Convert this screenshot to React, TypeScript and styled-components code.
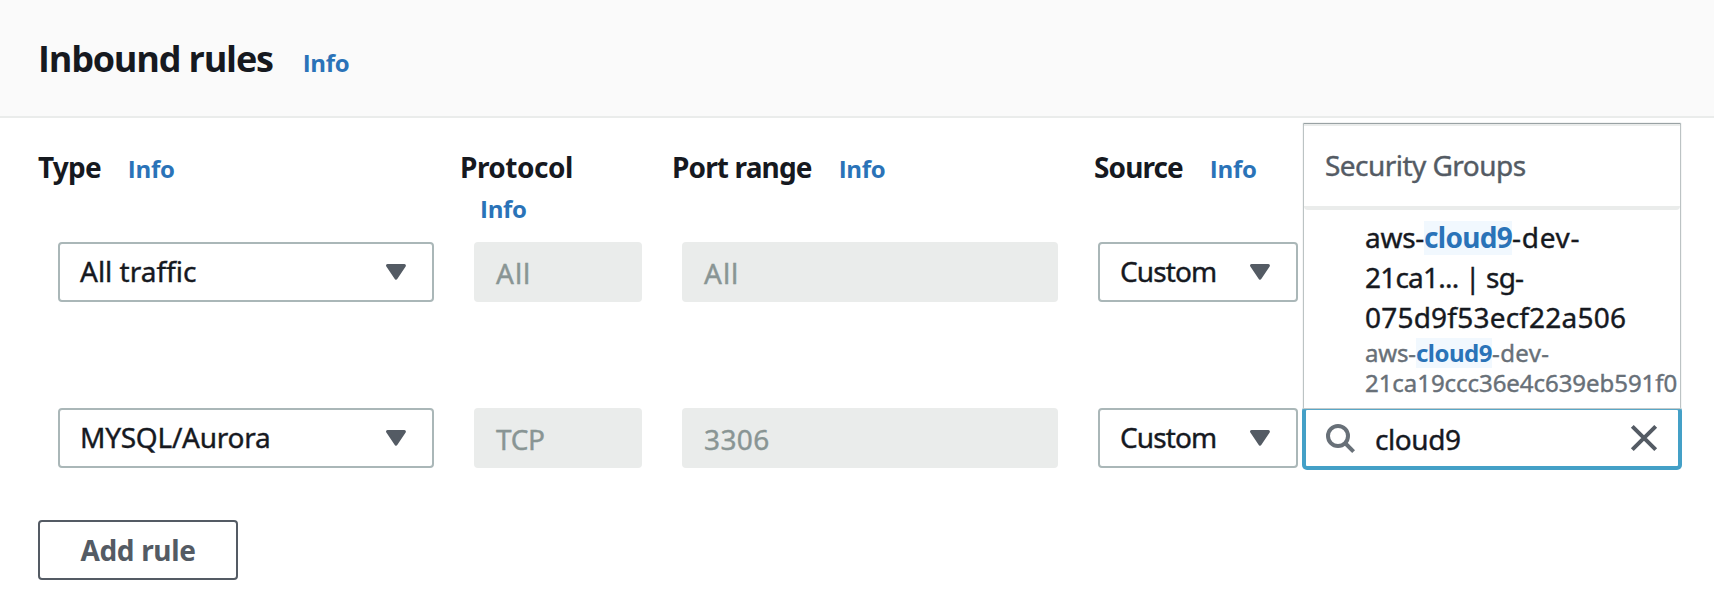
import React from 'react';
import styled, { createGlobalStyle } from 'styled-components';

const GlobalStyle = createGlobalStyle`
  * { box-sizing: border-box; }
  body {
    margin: 0;
    background: #ffffff;
    color: #16191f;
    font-family: 'Noto Sans', 'Liberation Sans', sans-serif;
    font-size: 28px;
    line-height: 40px;
  }
`;

const Panel = styled.section`
  width: 1714px;
  height: 602px;
  overflow: hidden;
  background: #ffffff;
`;

const PanelHeader = styled.header`
  display: flex;
  align-items: baseline;
  gap: 30px;
  height: 118px;
  padding: 37px 0 0 38px;
  background: #fafafa;
  border-bottom: 2px solid #eaeceb;
`;

const Title = styled.h2`
  margin: 0;
  font-family: 'Open Sans', 'Noto Sans', sans-serif;
  font-size: 36px;
  font-weight: 700;
  line-height: 44px;
  letter-spacing: -1.2px;
`;

const InfoLink = styled.a`
  font-family: 'Open Sans', 'Noto Sans', sans-serif;
  font-size: 24px;
  font-weight: 700;
  color: #2a73b8;
  letter-spacing: -0.3px;
`;

const Columns = styled.div`
  display: grid;
  grid-template-columns: 422px 212px 422px 1fr;
  height: 124px;
  padding: 29px 0 0 38px;
`;

const ColumnLabel = styled.div<{ $stacked?: boolean }>`
  display: flex;
  flex-direction: ${({ $stacked }) => ($stacked ? 'column' : 'row')};
  align-items: ${({ $stacked }) => ($stacked ? 'flex-start' : 'baseline')};
  gap: ${({ $stacked }) => ($stacked ? '2px' : '27px')};

  ${InfoLink} {
    margin-left: ${({ $stacked }) => ($stacked ? '20px' : '0')};
  }
`;

const Tracked = styled.span<{ $track?: number }>`
  letter-spacing: ${({ $track = 0 }) => $track}px;
  white-space: pre;
  -webkit-text-stroke: 0.4px currentColor;
`;

const LabelText = styled(Tracked)`
  font-weight: 700;
  -webkit-text-stroke: 0;
`;

const Row = styled.div`
  display: flex;
  gap: 40px;
  height: 60px;
  padding-left: 58px;
  margin-bottom: 106px;

  & + & { margin-bottom: 52px; }
`;

const SourceGroup = styled.div`
  display: flex;
  gap: 6px;
`;

const Select = styled.div<{ $width: number }>`
  display: flex;
  align-items: center;
  justify-content: space-between;
  width: ${({ $width }) => $width}px;
  height: 60px;
  padding: 0 26px 2px 20px;
  border: 2px solid #aab7b8;
  border-radius: 4px;
  background: #ffffff;

  svg { margin-top: 2px; }
`;

const ReadOnlyField = styled.div<{ $width: number }>`
  display: flex;
  align-items: center;
  width: ${({ $width }) => $width}px;
  height: 60px;
  padding: 2px 22px 0;
  border-radius: 4px;
  background: #eaeceb;
  color: #899594;
`;

const SearchBox = styled.div`
  position: relative;
  display: flex;
  align-items: center;
  width: 376px;
  height: 60px;
  padding: 0 18px;
  border: 2px solid #44a0c7;
  border-radius: 3px;
  background: #ffffff;
  box-shadow: 0 0 0 2px #44a0c7;
`;

const Query = styled(Tracked)`
  flex: 1;
  padding: 2px 0 0 19px;
`;

const Dropdown = styled.div`
  position: absolute;
  left: -2px;
  right: -2px;
  bottom: calc(100% + 2px);
  height: 284px;
  background: #ffffff;
  border-top: 2px solid #eaeceb;
  box-shadow: 0 -1.5px 1px 0 #6f7b7d, 0 0 1px 1px #c3cacb;
`;

const GroupHeader = styled.div`
  height: 84px;
  padding: 20px 20px 0 21px;
  border-bottom: 4px solid #eaeceb;
  border-radius: 0 0 4px 4px;
  color: #545b64;
  line-height: 38px;
`;

const Option = styled.div`
  padding: 7px 0 0 61px;
`;

const OptionLine = styled.div`
  white-space: nowrap;
`;

const Details = styled.div`
  margin-top: 1px;
  font-size: 24px;
  line-height: 30px;
  color: #687078;
`;

const Match = styled.mark<{ $track: number; $height: number; $offset: number }>`
  color: #2a73b8;
  font-weight: 700;
  letter-spacing: ${({ $track }) => $track}px;
  background: linear-gradient(#f1f8fe, #f1f8fe) 0 ${({ $offset }) => $offset}px / 100%
    ${({ $height }) => $height}px no-repeat;
`;

const AddButton = styled.button`
  display: block;
  width: 200px;
  height: 60px;
  margin-left: 38px;
  padding: 0;
  border: 2px solid #545b64;
  border-radius: 4px;
  background: #ffffff;
  color: #545b64;
  font: 700 28px/40px 'Noto Sans', 'Liberation Sans', sans-serif;
  letter-spacing: -0.35px;
`;

const Caret = () => (
  <svg width="20" height="16" viewBox="0 0 20 16">
    <path d="M1.6 1.6h16.8L10 14.2z" fill="#545b64" stroke="#545b64" strokeWidth="3" strokeLinejoin="round" />
  </svg>
);

const SearchIcon = () => (
  <svg width="32" height="32" viewBox="0 0 32 32" fill="none" stroke="#687078" strokeWidth="4">
    <circle cx="14" cy="14" r="10" />
    <path d="M21 21l8.6 8.6" />
  </svg>
);

const ClearIcon = () => (
  <svg width="32" height="32" viewBox="0 0 32 32" fill="none" stroke="#545b64" strokeWidth="4">
    <path d="M4.3 4.3l23.4 23.4M27.7 4.3L4.3 27.7" />
  </svg>
);

const columns = [
  { label: 'Type', track: -0.8 },
  { label: 'Protocol', track: -0.49, stacked: true },
  { label: 'Port range', track: -0.85 },
  { label: 'Source', track: -0.9 },
];

const rules = [
  {
    type: { text: 'All traffic', track: 0 },
    protocol: { text: 'All', track: 1 },
    port: { text: 'All', track: 1 },
    searching: false,
  },
  {
    type: { text: 'MYSQL/Aurora', track: -0.25 },
    protocol: { text: 'TCP', track: -0.35 },
    port: { text: '3306', track: 0.4 },
    searching: true,
  },
];

const SecurityGroupSearch = () => (
  <SearchBox>
    <Dropdown>
      <GroupHeader>
        <Tracked $track={-0.54}>Security Groups</Tracked>
      </GroupHeader>
      <Option>
        <OptionLine>
          <Tracked $track={-0.28}>aws-</Tracked>
          <Match $track={-0.7} $height={34} $offset={3}>cloud9</Match>
          <Tracked $track={0.7}>-dev-</Tracked>
        </OptionLine>
        <OptionLine>
          <Tracked $track={-0.79}>21ca1... | sg-</Tracked>
        </OptionLine>
        <OptionLine>
          <Tracked $track={0.21}>075d9f53ecf22a506</Tracked>
        </OptionLine>
        <Details>
          <OptionLine>
            <Tracked $track={-0.15}>aws-</Tracked>
            <Match $track={-0.5} $height={30} $offset={2}>cloud9</Match>
            <Tracked $track={0.4}>-dev-</Tracked>
          </OptionLine>
          <OptionLine>
            <Tracked $track={-0.05}>21ca19ccc36e4c639eb591f0</Tracked>
          </OptionLine>
        </Details>
      </Option>
    </Dropdown>
    <SearchIcon />
    <Query $track={-0.42}>cloud9</Query>
    <ClearIcon />
  </SearchBox>
);

export default function App() {
  return (
    <>
      <GlobalStyle />
      <Panel>
        <PanelHeader>
          <Title>Inbound rules</Title>
          <InfoLink>Info</InfoLink>
        </PanelHeader>
        <Columns>
          {columns.map(({ label, track, stacked }) => (
            <ColumnLabel key={label} $stacked={stacked}>
              <LabelText $track={track}>{label}</LabelText>
              <InfoLink>Info</InfoLink>
            </ColumnLabel>
          ))}
        </Columns>
        {rules.map(({ type, protocol, port, searching }) => (
          <Row key={type.text}>
            <Select $width={376}>
              <Tracked $track={type.track}>{type.text}</Tracked>
              <Caret />
            </Select>
            <ReadOnlyField $width={168}>
              <Tracked $track={protocol.track}>{protocol.text}</Tracked>
            </ReadOnlyField>
            <ReadOnlyField $width={376}>
              <Tracked $track={port.track}>{port.text}</Tracked>
            </ReadOnlyField>
            <SourceGroup>
              <Select $width={200}>
                <Tracked $track={-0.9}>Custom</Tracked>
                <Caret />
              </Select>
              {searching && <SecurityGroupSearch />}
            </SourceGroup>
          </Row>
        ))}
        <AddButton>Add rule</AddButton>
      </Panel>
    </>
  );
}
